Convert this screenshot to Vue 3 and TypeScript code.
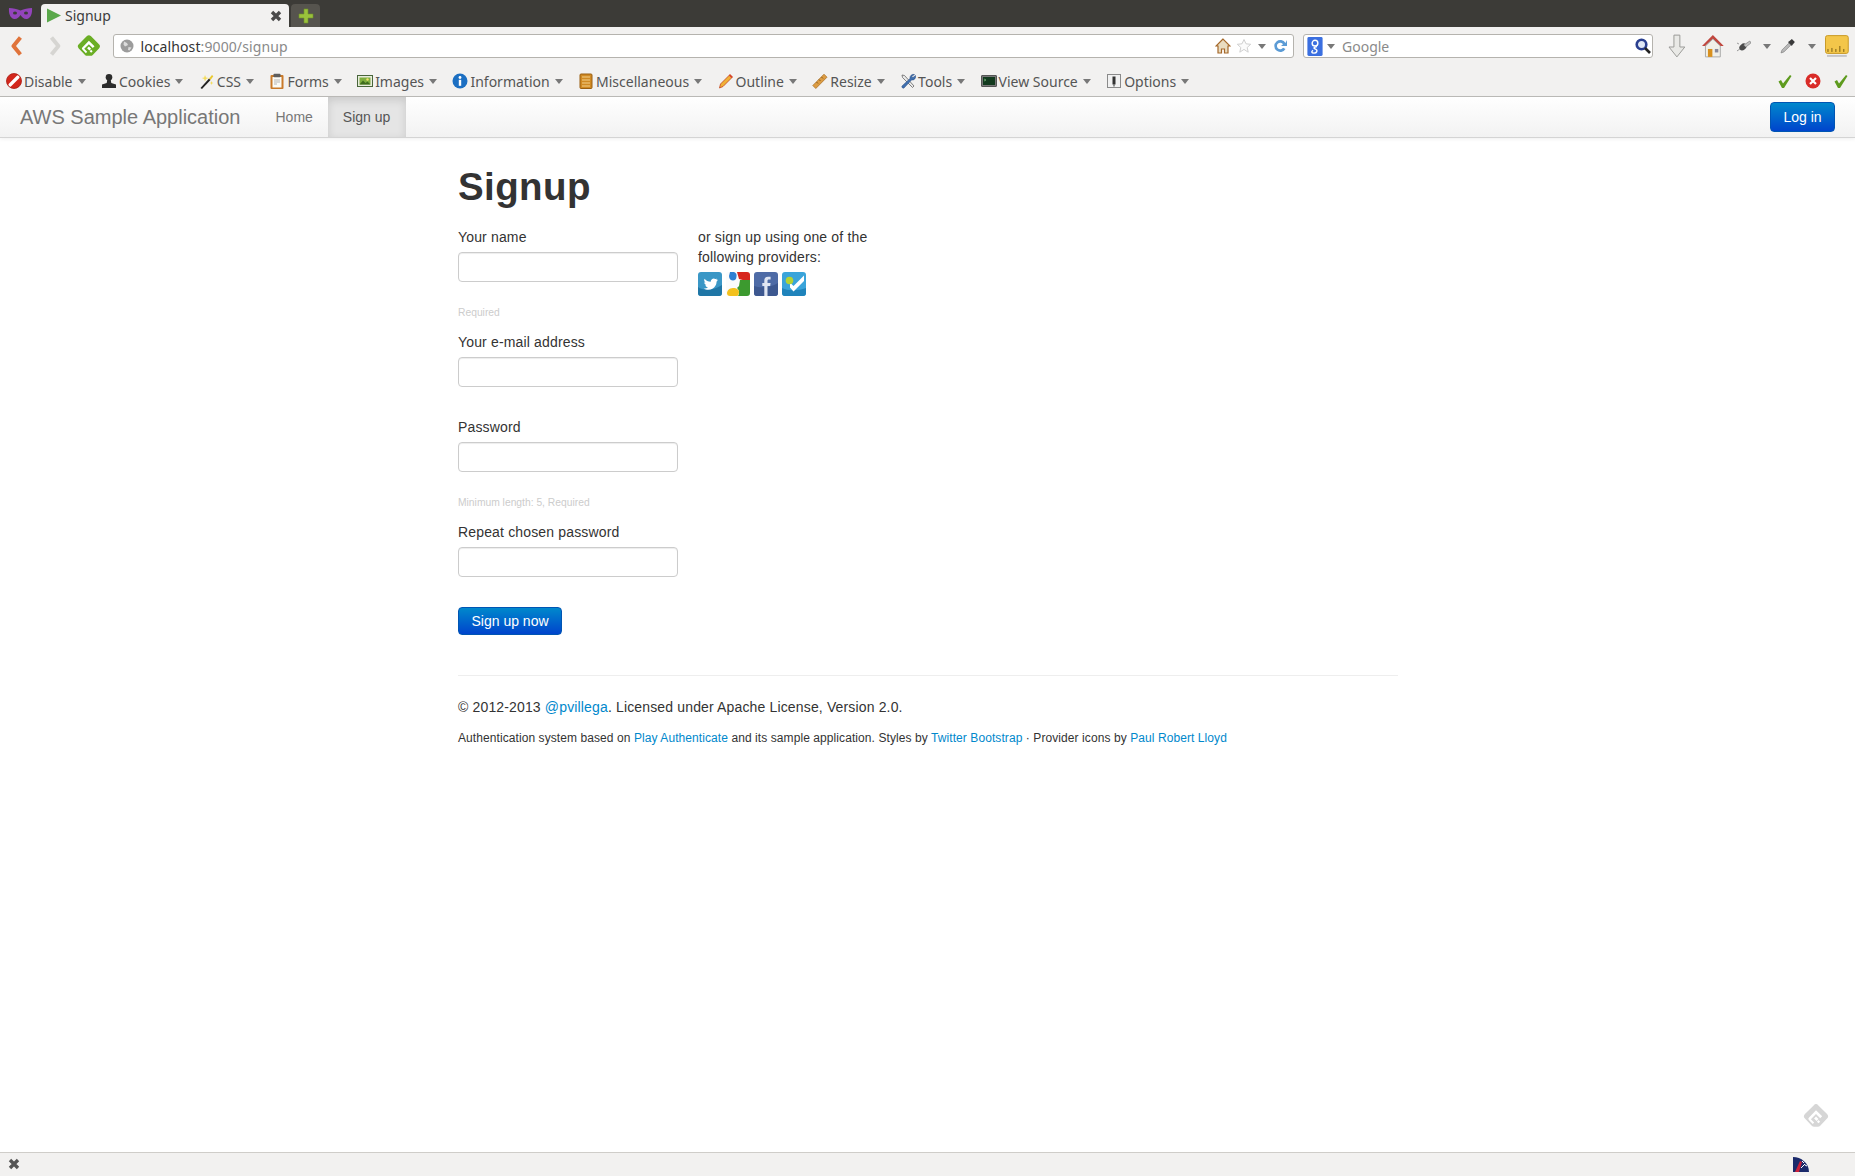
<script setup lang="ts">
const menus = [
  { label: 'Disable', icon: 'disable' },
  { label: 'Cookies', icon: 'cookies' },
  { label: 'CSS', icon: 'css' },
  { label: 'Forms', icon: 'forms' },
  { label: 'Images', icon: 'images' },
  { label: 'Information', icon: 'info' },
  { label: 'Miscellaneous', icon: 'misc' },
  { label: 'Outline', icon: 'outline' },
  { label: 'Resize', icon: 'resize' },
  { label: 'Tools', icon: 'tools' },
  { label: 'View Source', icon: 'source' },
  { label: 'Options', icon: 'options' },
]

const fields = [
  { label: 'Your name', type: 'text', help: 'Required' },
  { label: 'Your e-mail address', type: 'text', help: '' },
  { label: 'Password', type: 'password', help: 'Minimum length: 5, Required' },
  { label: 'Repeat chosen password', type: 'password', help: '' },
]
</script>

<template>
  <div class="window">
    <svg class="defs" width="0" height="0">
      <symbol id="feedly" viewBox="0 0 24 24">
        <path d="M9.800 2.200a3 3 0 0 1 4.400 0l8 8a3 3 0 0 1 0 4.200l-6.300 6.600a3 3 0 0 1-2.200.9h-3.400a3 3 0 0 1-2.200-.9L1.800 14.400a3 3 0 0 1 0-4.200z" fill="currentColor" />
        <path d="M12 6.600l5.700 5.700-1.800 1.800-3.900-3.900-4.700 4.700 3 3-1.300 1.400-3.600-3.700a1.400 1.400 0 0 1 0-2z" fill="#fff" />
        <path d="M12 12.500l2.300 2.300-1.800 1.800-2.300-2.300zM12.800 17.300l1.500-1.500 1.500 1.500-1.500 1.500z" fill="#fff" />
      </symbol>
      <symbol id="disable" viewBox="0 0 16 16">
        <circle cx="8" cy="8" r="7.500" fill="#d3271c" />
        <path d="M4 12l8-8" stroke="#fff" stroke-width="3.200" stroke-linecap="round" />
        <circle cx="8" cy="8" r="7.500" fill="none" stroke="#a81a12" stroke-width=".8" />
      </symbol>
      <symbol id="cookies" viewBox="0 0 16 16">
        <circle cx="8" cy="4.200" r="3.300" fill="#2c2c2c" />
        <path d="M6.300 6.500h3.400l.6 3.500 4.700 1.500V15H1v-3.500L5.700 10z" fill="#2c2c2c" />
      </symbol>
      <symbol id="css" viewBox="0 0 16 16">
        <path d="M1.500 15L10 5.500l1.500 1.500L3 16z" fill="#222" />
        <path d="M10 5.500l3-3.500 1.300 1.200-2.800 3.800z" fill="#e9c92f" />
        <path d="M6 2l1 2.500 2.500.5-2.500 1-1 2.500-.8-2.500L2.800 5l2.400-.5zM12.500 8l.6 1.500 1.400.4-1.400.6-.6 1.500-.5-1.500-1.400-.6 1.400-.4z" fill="#f4dc5c" />
      </symbol>
      <symbol id="forms" viewBox="0 0 16 16">
        <rect x="1.500" y="2" width="13" height="14" rx="1" fill="#c97a2a" />
        <rect x="3.500" y="4" width="9" height="10.500" fill="#fbfbf6" />
        <rect x="4.500" y=".8" width="7" height="3.500" rx=".8" fill="#5e5e5e" />
        <path d="M5 7h6M5 9h6M5 11h3" stroke="#b5b5b5" />
      </symbol>
      <symbol id="images" viewBox="0 0 16 16">
        <rect x=".5" y="2.500" width="15" height="11" fill="#e8ecdc" stroke="#48653a" />
        <rect x="2.500" y="4.500" width="11" height="7" fill="#7eae3e" />
        <path d="M2.500 11.500l3.500-4 2.500 2.500 2-1.500 3 3z" fill="#3f6d1e" />
        <circle cx="10.500" cy="6.500" r="1.200" fill="#f2e16b" />
      </symbol>
      <symbol id="info" viewBox="0 0 16 16">
        <circle cx="8" cy="8" r="7.500" fill="#1c6fc2" />
        <circle cx="8" cy="4.500" r="1.400" fill="#fff" />
        <rect x="6.800" y="6.800" width="2.400" height="6" fill="#fff" />
      </symbol>
      <symbol id="misc" viewBox="0 0 16 16">
        <rect x="2" y="1" width="12" height="14.500" rx="1" fill="#d08a23" stroke="#9a5f12" />
        <path d="M4 4h8M4 7h8M4 10h8M4 13h8" stroke="#f4d08a" />
      </symbol>
      <symbol id="outline" viewBox="0 0 16 16">
        <path d="M1.500 15l1-4L12 1.500 14.500 4 5 13.500z" fill="#f0b135" stroke="#c4421e" stroke-width=".8" />
        <path d="M11 2.500L13.500 5l1-1L12 1.500z" fill="#d8392b" />
      </symbol>
      <symbol id="resize" viewBox="0 0 16 16">
        <path d="M.8 12.500L12 1.200l3 3L3.800 15.500z" fill="#dd9d44" stroke="#a66a1e" stroke-width=".7" />
        <path d="M4.500 9l1.500 1.500M7 6.500l1.500 1.500M9.500 4l1.500 1.500" stroke="#8a5a1a" />
      </symbol>
      <symbol id="tools" viewBox="0 0 16 16">
        <path d="M2 2l2.500.5L14 13l-1.500 1.500L2.500 4.500z" fill="#e8e8e8" stroke="#666" stroke-width=".8" />
        <path d="M14.500 1.500a3.500 3.500 0 0 0-4.500 4L2 13a1.500 1.500 0 0 0 2 2l7.500-8a3.500 3.500 0 0 0 4-4.500L13 4.500l-1.500-1z" fill="#3f6fae" stroke="#2a4d80" stroke-width=".5" />
      </symbol>
      <symbol id="source" viewBox="0 0 16 16">
        <rect x=".5" y="2.500" width="15" height="11" rx=".5" fill="#777" stroke="#555" />
        <rect x="2" y="4" width="12" height="8" fill="#123a1e" />
        <path d="M3 6l2 1-2 1" stroke="#7fc27f" fill="none" stroke-width=".7" />
      </symbol>
      <symbol id="options" viewBox="0 0 16 16">
        <rect x="1.500" y="1.500" width="13" height="13" fill="#f1f1f1" stroke="#8a8a8a" />
        <rect x="6.500" y="3.500" width="3" height="8" fill="#333" />
        <rect x="7.500" y="11.500" width="1" height="2" fill="#333" />
      </symbol>
      <symbol id="check" viewBox="0 0 16 16">
        <path d="M1.500 8.500l2.500-1.500 2 3.500L13 2l1.500 1-7.500 12H5z" fill="#5e9b1e" />
      </symbol>
      <symbol id="house" viewBox="0 0 24 24">
        <path d="M12 1L1 12h3.500l7.500-7 7.500 7H23z" fill="#c0473f" />
        <path d="M4.500 12L12 5l7.500 7v11h-15z" fill="#f0efe8" stroke="#aaa" />
        <rect x="7" y="15" width="4.500" height="8" fill="#d8901e" />
        <rect x="14" y="15" width="3.500" height="3.500" fill="#889" />
      </symbol>
      <symbol id="twitter" viewBox="0 0 24 24">
        <rect width="24" height="24" rx="3" fill="#3a97c6" />
        <path d="M0 15c5 4 14 4 24-2v8a3 3 0 0 1-3 3H3a3 3 0 0 1-3-3z" fill="#1f76a6" />
        <path d="M19.500 7.500c-.5.300-1.100.4-1.700.5.600-.4 1.100-.9 1.300-1.600-.5.300-1.200.6-1.800.7A3 3 0 0 0 12.700 9.800C10.200 9.700 8 8.500 6.600 6.700c-.8 1.300-.4 3 .9 3.900-.5 0-.9-.1-1.300-.4 0 1.400 1 2.600 2.400 2.900-.4.100-.9.200-1.300.1.400 1.200 1.400 2 2.700 2-1.200 1-2.800 1.400-4.400 1.200 3.700 2.400 9.700 1.500 11.800-2.600 1-1.600 1.200-3.300 1.100-4.100.6-.4 1.100-1 1-1.700z" fill="#fff" />
      </symbol>
      <symbol id="google" viewBox="0 0 24 24">
        <rect width="24" height="24" rx="3" fill="#fbfbfb" />
        <path d="M11 0h10a3 3 0 0 1 3 3v7L13 7z" fill="#d7261e" />
        <path d="M24 8v13a3 3 0 0 1-3 3h-9c2-3 1-6-1-8l2-2 1-6z" fill="#3c9a2f" />
        <path d="M4 0h4a4 4 0 0 1 2.500 4.500C10.500 7 9 8.500 7 8.500S3 7 3 4z" fill="#2f7fd2" />
        <path d="M1 21c0-2 2-5 6-5 4 0 6 2 6 4 0 2-1 4-2 4H4c-2 0-3-1-3-3z" fill="#f3c11d" />
      </symbol>
      <symbol id="facebook" viewBox="0 0 24 24">
        <rect width="24" height="24" rx="3" fill="#4e6ba6" />
        <path d="M0 14c6 2 16 2 24-3v10a3 3 0 0 1-3 3H3a3 3 0 0 1-3-3z" fill="#3d5890" />
        <path d="M13.500 24v-10h2.700l.4-3h-3.100V9c0-1 .3-1.500 1.400-1.500h1.700V4.700h-2.500c-2.700 0-3.800 1.500-3.800 3.800V11H8.300v3h2v10z" fill="#dfe5f2" />
      </symbol>
      <symbol id="foursquare" viewBox="0 0 24 24">
        <rect width="24" height="24" rx="3" fill="#3aa4da" />
        <path d="M0 16c6 3 16 3 24 0v5a3 3 0 0 1-3 3H3a3 3 0 0 1-3-3z" fill="#1f83bb" />
        <path d="M8 10.500l3.500 3.500L22 3.500v5.500L11.500 19.500 8 15.500z" fill="#fff" />
        <circle cx="7.500" cy="8.500" r="3.800" fill="#b4d334" />
      </symbol>
    </svg>

    <div class="tabbar">
      <svg class="mask" viewBox="0 0 25 13" width="25" height="13">
        <path d="M1 1c4 0 8 1 11.500 2.500C16 2 20 1 24 1c.5 5-1 10-5 11-3 .5-5-2-6.500-4C11 10 9 12.500 6 12 2 11 .5 6 1 1z" fill="#9344bb" />
        <ellipse cx="7" cy="6" rx="2" ry="1.500" fill="#3c3b37" />
        <ellipse cx="18" cy="6" rx="2" ry="1.500" fill="#3c3b37" />
      </svg>
      <div class="tab">
        <svg viewBox="0 0 14 14" width="14" height="15">
          <path d="M0 0l14 7L0 14z" fill="#5aa84a" />
        </svg>
        <span class="tab-title">Signup</span>
        <svg class="tab-close" viewBox="0 0 12 12" width="12" height="12">
          <path d="M2 2l8 8M10 2l-8 8" stroke="#4a4a4a" stroke-width="3.400" />
        </svg>
      </div>
      <div class="new-tab">
        <svg viewBox="0 0 16 16" width="16" height="16">
          <path d="M6 1h4v5h5v4h-5v5H6v-5H1V6h5z" fill="#9ac13c" stroke="#6f9426" stroke-width=".6" />
        </svg>
      </div>
    </div>

    <div class="navrow">
      <svg class="nav-back" viewBox="0 0 12 20" width="12" height="20">
        <path d="M9.500 1.500L2.500 10l7 8.500" fill="none" stroke="#e0733a" stroke-width="4" stroke-linejoin="round" />
      </svg>
      <svg class="nav-forward" viewBox="0 0 12 20" width="12" height="20">
        <path d="M2.500 1.500l7 8.500-7 8.500" fill="none" stroke="#d6d5d2" stroke-width="4" stroke-linejoin="round" />
      </svg>
      <svg class="nav-feedly" width="24" height="24"><use href="#feedly" /></svg>
      <div class="urlbar">
        <svg viewBox="0 0 14 14" width="14" height="14">
          <circle cx="7" cy="7" r="6.500" fill="#9c9c9c" />
          <path d="M4 2.500l3 1.500 1 2-3 1.500-1.500-2zM8.500 8l3 .5-2 3-1.500-.5z" fill="#dcdcdc" />
        </svg>
        <span class="url"><span class="host">localhost</span>:9000/signup</span>
        <svg class="url-home" viewBox="0 0 16 16" width="16" height="16">
          <path d="M8 1L1 8h2v7h3.500v-4h3v4H13V8h2z" fill="#e9dcc0" stroke="#a5682a" stroke-width="1.200" />
        </svg>
        <svg class="url-star" viewBox="0 0 16 16" width="16" height="16">
          <path d="M8 1.500l2 4.300 4.700.5-3.500 3.200 1 4.700L8 11.400l-4.200 2.800 1-4.700L1.300 6.300 6 5.800z" fill="#fbfbfb" stroke="#d0d0d0" />
        </svg>
        <i class="caret"></i>
        <svg class="url-reload" viewBox="0 0 16 16" width="16" height="16">
          <path d="M13.500 5A6 6 0 1 0 13.500 11l-2.500-1.200A3.300 3.300 0 1 1 11 6.200L9 8h6V2z" fill="#5b9bd5" />
        </svg>
      </div>
      <div class="searchbar">
        <svg viewBox="0 0 16 20" width="16" height="19">
          <rect width="16" height="20" rx="1.500" fill="#3b6fe0" />
          <circle cx="8" cy="6.500" r="3" fill="none" stroke="#fff" stroke-width="1.500" />
          <path d="M10 10c-4 1-4 2-1 3 2 1 1 4-2 4s-3-2-1-3" fill="none" stroke="#fff" stroke-width="1.500" />
        </svg>
        <i class="caret"></i>
        <span class="search-text">Google</span>
        <svg class="search-go" viewBox="0 0 16 16" width="16" height="16">
          <circle cx="6.500" cy="6.500" r="4.800" fill="#dfe7f5" stroke="#2a3f8f" stroke-width="2.600" />
          <path d="M10 10l5 5" stroke="#222" stroke-width="2.600" />
        </svg>
      </div>
      <svg class="tool-down" viewBox="0 0 20 26" width="20" height="26">
        <path d="M7 2h6v12h5l-8 10-8-10h5z" fill="#e9e9e6" stroke="#9b9b98" />
      </svg>
      <svg class="tool-home" width="24" height="24"><use href="#house" /></svg>
      <svg class="tool-fly" viewBox="0 0 16 16" width="16" height="16">
        <ellipse cx="7" cy="9" rx="3" ry="4" transform="rotate(50 7 9)" fill="#4a4a4a" />
        <path d="M8 7l6-4 1 2-5 4zM4 11l-3 2M3 6l-2-1" stroke="#999" fill="#c5c5c5" />
      </svg>
      <i class="caret tool-caret"></i>
      <svg class="tool-dropper" viewBox="0 0 16 16" width="16" height="16">
        <path d="M1 15l1-3 7-7 2 2-7 7z" fill="#b8b8b8" stroke="#777" stroke-width=".6" />
        <path d="M9 3.500L12 1l3 3-2.500 3L12 8 8 4z" fill="#3a3a3a" />
      </svg>
      <i class="caret tool-caret"></i>
      <svg class="tool-ruler" viewBox="0 0 24 22" width="24" height="22">
        <rect x=".5" y=".5" width="23" height="18" rx="2" fill="#f3c64a" stroke="#c89a26" />
        <path d="M3 17v-3M7 17v-4M11 17v-3M15 17v-6M19 17v-3" stroke="#7a5f14" />
        <path d="M2 21h20" stroke="#c4c4c8" stroke-width="2" />
      </svg>
    </div>

    <div class="menurow">
      <div v-for="item in menus" :key="item.label" class="menu-item">
        <svg width="16" height="16"><use :href="`#${item.icon}`" /></svg>
        <span>{{ item.label }}</span>
        <i class="caret"></i>
      </div>
      <div class="status-icons">
        <svg width="16" height="16"><use href="#check" /></svg>
        <svg viewBox="0 0 16 16" width="16" height="16">
          <circle cx="8" cy="8" r="7.500" fill="#d92c28" />
          <path d="M5 5l6 6M11 5l-6 6" stroke="#fff" stroke-width="2.200" />
        </svg>
        <svg width="16" height="16"><use href="#check" /></svg>
      </div>
    </div>

    <header class="navbar">
      <span class="brand">AWS Sample Application</span>
      <nav class="nav-links">
        <a class="nav-link">Home</a>
        <a class="nav-link active">Sign up</a>
      </nav>
      <button class="btn login" type="button">Log in</button>
    </header>

    <main class="page">
      <h1>Signup</h1>
      <div class="columns">
        <form class="signup-form" @submit.prevent>
          <div v-for="field in fields" :key="field.label" class="field">
            <label>{{ field.label }}</label>
            <input :type="field.type" />
            <div v-if="field.help" class="help">{{ field.help }}</div>
          </div>
          <button class="btn submit" type="submit">Sign up now</button>
        </form>
        <div class="providers">
          <p>or sign up using one of the following providers:</p>
          <div class="provider-icons">
            <svg width="24" height="24"><use href="#twitter" /></svg>
            <svg width="24" height="24"><use href="#google" /></svg>
            <svg width="24" height="24"><use href="#facebook" /></svg>
            <svg width="24" height="24"><use href="#foursquare" /></svg>
          </div>
        </div>
      </div>
      <hr />
      <footer>
        <p class="copyright">
          © 2012-2013 <a>@pvillega</a>. Licensed under Apache License, Version 2.0.
        </p>
        <p class="credits">
          Authentication system based on <a>Play Authenticate</a> and its sample application. Styles by
          <a>Twitter Bootstrap</a> · Provider icons by <a>Paul Robert Lloyd</a>
        </p>
      </footer>
      <svg class="feedly-ghost" width="26" height="26"><use href="#feedly" /></svg>
    </main>

    <div class="statusbar">
      <svg viewBox="0 0 12 12" width="12" height="12">
        <path d="M2 2l8 8M10 2l-8 8" stroke="#555" stroke-width="3.400" />
      </svg>
      <svg class="gauge" viewBox="0 0 18 16" width="18" height="16">
        <path d="M1 1c8 0 16 6 16 15H1z" fill="#1b2a6b" />
        <path d="M3 16l5-11 2 1-3 10z" fill="#c8203a" />
        <path d="M10 5l2 2M13 9l2 1M9 12l4-4" stroke="#fff" />
      </svg>
    </div>
  </div>
</template>

<style scoped>
.defs {
  position: absolute;
}

.window {
  display: flex;
  flex-direction: column;
  height: 1176px;
  overflow: hidden;
  background: #fff;
  font-family: "Liberation Sans", Arial, sans-serif;
  font-size: 14px;
  color: #333;
}

.tabbar {
  display: flex;
  align-items: flex-end;
  height: 27px;
  flex: none;
  padding-left: 8px;
  background: #3c3b37;
  box-sizing: border-box;
}

.mask {
  align-self: center;
  margin-right: 8px;
}

.tab {
  display: flex;
  align-items: center;
  width: 248px;
  height: 23px;
  padding: 0 7px 0 6px;
  box-sizing: border-box;
  background: #f2f1f0;
  border-radius: 4px 4px 0 0;
  font-family: "Noto Sans", sans-serif;
  font-size: 14px;
  color: #3c3c3c;
}

.tab-title {
  margin-left: 4px;
}

.tab-close {
  margin-left: auto;
}

.new-tab {
  display: flex;
  align-items: center;
  justify-content: center;
  width: 29px;
  height: 23px;
  margin-left: 2px;
  background: #56544e;
  border-radius: 4px 4px 0 0;
}

.navrow {
  display: flex;
  align-items: center;
  flex: none;
  height: 39px;
  padding: 7px 6px 8px 11px;
  box-sizing: border-box;
  background: #f2f1f0;
  font-family: "Noto Sans", sans-serif;
}

.nav-forward {
  margin-left: 26px;
}

.nav-feedly {
  margin-left: 16px;
  color: #6bae25;
}

.urlbar,
.searchbar {
  display: flex;
  flex: none;
  align-items: center;
  height: 24px;
  box-sizing: border-box;
  background: #fff;
  border: 1px solid #b5b3ae;
  border-radius: 3px;
}

.urlbar {
  width: 1181px;
  margin-left: 12px;
  padding: 0 5px 0 6px;
}

.url {
  margin-left: 7px;
  font-size: 14px;
  letter-spacing: 0.1px;
  color: #8a8a8a;
}

.host {
  color: #333;
}

.url-home {
  margin-left: auto;
}

.url-star {
  margin-left: 5px;
}

.url-reload {
  margin-left: 6px;
}

.urlbar .caret {
  margin-left: 6px;
}

.searchbar {
  width: 350px;
  margin-left: 9.500px;
  padding: 0 1px 0 3px;
}

.searchbar .caret {
  margin-left: 4px;
}

.search-text {
  margin-left: 7px;
  font-size: 14px;
  color: #8a8a8a;
}

.search-go {
  margin-left: auto;
}

.tool-down {
  margin-left: 14px;
}

.tool-home {
  margin-left: 14px;
}

.tool-fly {
  margin-left: 11px;
}

.tool-caret {
  margin-left: 12px;
}

.tool-dropper {
  margin-left: 9px;
}

.tool-ruler {
  margin-left: 9px;
}

.caret {
  display: inline-block;
  flex: none;
  width: 0;
  height: 0;
  border-left: 4px solid transparent;
  border-right: 4px solid transparent;
  border-top: 5px solid #787878;
}

.menurow {
  display: flex;
  align-items: center;
  flex: none;
  height: 31px;
  padding: 0 6px;
  gap: 15.400px;
  background: #f2f1f0;
  border-bottom: 1px solid #bdbcb9;
  box-sizing: border-box;
  font-family: "Noto Sans", sans-serif;
  font-size: 14px;
  color: #555;
}

.menu-item {
  display: flex;
  align-items: center;
}

.menu-item span {
  margin-left: 2px;
}

.menu-item .caret {
  margin-left: 5px;
}

.status-icons {
  display: flex;
  gap: 12px;
  margin-left: auto;
}

.navbar {
  display: flex;
  align-items: center;
  flex: none;
  height: 41px;
  padding: 0 20px;
  box-sizing: border-box;
  background: linear-gradient(#ffffff, #f2f2f2);
  border-bottom: 1px solid #d4d4d4;
  box-shadow: 0 1px 4px rgba(0, 0, 0, 0.065);
}

.brand {
  font-size: 20px;
  color: #777;
}

.nav-links {
  display: flex;
  align-self: stretch;
  margin-left: 20px;
}

.nav-link {
  display: flex;
  align-items: center;
  padding: 0 15px;
  color: #777;
}

.nav-link.active {
  padding-right: 16px;
  background: #e5e5e5;
  color: #555;
  box-shadow: inset 0 3px 8px rgba(0, 0, 0, 0.125);
}

.btn {
  padding: 0;
  border: 1px solid #0055b3;
  border-radius: 4px;
  background: linear-gradient(#0088cc, #0044cc);
  font-family: "Liberation Sans", Arial, sans-serif;
  font-size: 14px;
  color: #fff;
}

.login {
  width: 65px;
  height: 30px;
  margin-left: auto;
}

.submit {
  display: block;
  width: 104px;
  height: 28px;
}

.page {
  position: relative;
  flex: 1;
  width: 940px;
  margin: 0 auto 0 458px;
  padding-top: 29px;
  box-sizing: border-box;
}

h1 {
  margin: 0 0 20px;
  font-size: 38.500px;
  line-height: 40px;
  font-weight: bold;
  letter-spacing: 0.400px;
  color: #333;
}

.columns {
  display: flex;
  gap: 20px;
}

.signup-form,
.providers {
  width: 220px;
}

.field {
  margin-bottom: 30px;
}

.field label {
  display: block;
  margin-bottom: 5px;
  line-height: 20px;
  letter-spacing: 0.160px;
}

.field input {
  display: block;
  width: 220px;
  height: 30px;
  box-sizing: border-box;
  border: 1px solid #ccc;
  border-radius: 4px;
  box-shadow: inset 0 1px 1px rgba(0, 0, 0, 0.075);
  background: #fff;
}

.help {
  margin-top: 21px;
  margin-bottom: -21px;
  font-size: 10.300px;
  line-height: 20px;
  color: #ccc;
}

.providers p {
  margin: 0 0 5px;
  line-height: 20px;
  letter-spacing: 0.160px;
}

.provider-icons {
  display: flex;
  gap: 4px;
}

hr {
  height: 1px;
  margin: 40px 0 21px;
  border: 0;
  background: #eee;
}

footer p {
  margin: 0;
}

footer a {
  color: #0088cc;
}

.copyright {
  line-height: 20px;
  letter-spacing: 0.150px;
}

.credits {
  margin-top: 12px;
  font-size: 12px;
  line-height: 18px;
  letter-spacing: 0.080px;
}

.feedly-ghost {
  position: absolute;
  left: 1345px;
  top: 965px;
  color: #d6d6d6;
}

.statusbar {
  display: flex;
  align-items: center;
  flex: none;
  height: 24px;
  padding: 0 45px 2px 8px;
  box-sizing: border-box;
  background: #f2f1f0;
  border-top: 1px solid #cfcdc9;
}

.gauge {
  margin-left: auto;
}
</style>

<style>
html,
body {
  margin: 0;
  background: #fff;
}
</style>
